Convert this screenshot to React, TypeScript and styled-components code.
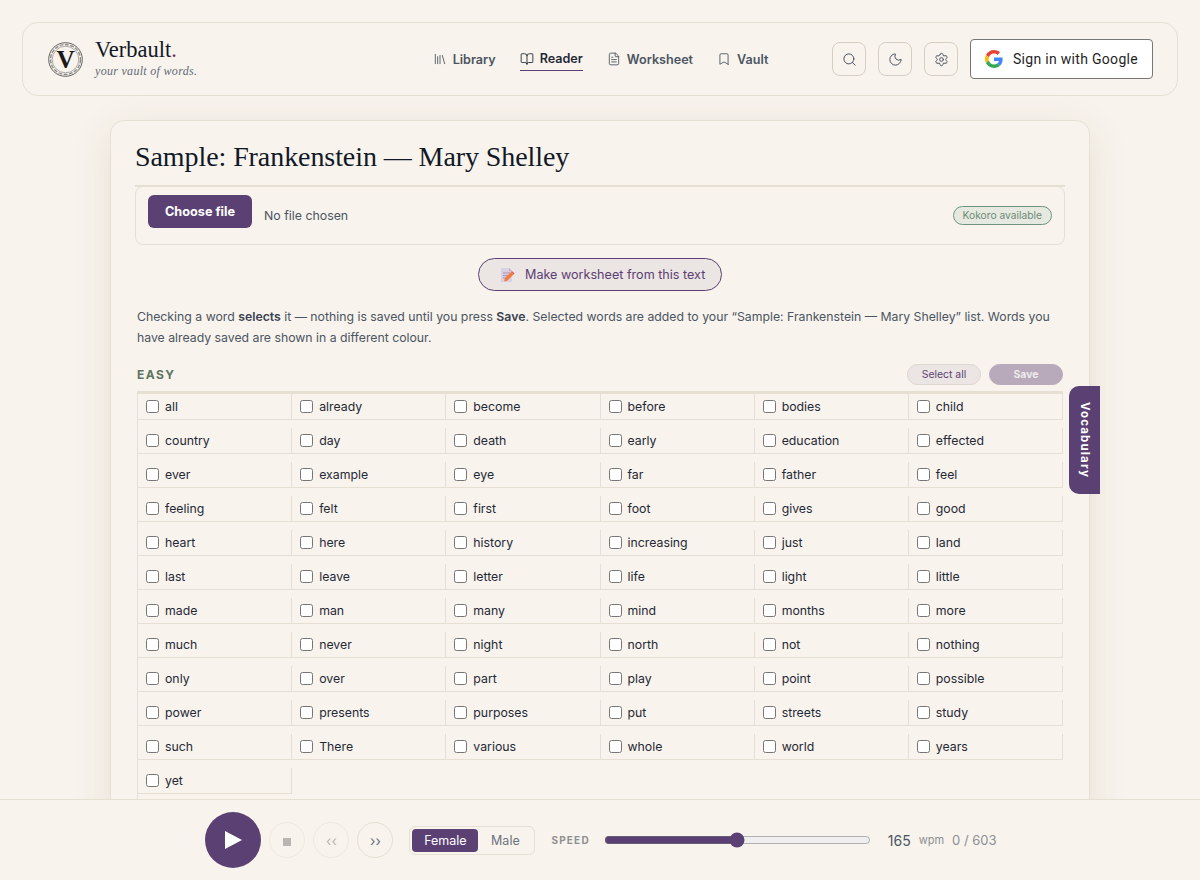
import React from 'react';
import styled, { createGlobalStyle } from 'styled-components';
import { BookOpen, Bookmark, FileText, Library, Moon, Search, Settings } from 'lucide-react';

const purple = '#5b4173';
const line = '#e6dfd3';
const paper = '#f8f3ec';

const GlobalStyle = createGlobalStyle`
  html, body {
    margin: 0;
    height: 880px;
    overflow: hidden;
    background: ${paper};
    font-family: Inter, 'Liberation Sans', sans-serif;
    color: #1f2937;
  }
  * {
    box-sizing: border-box;
  }
`;

const Page = styled.div`
  padding: 22px 22px 0;
`;

const Topbar = styled.header`
  display: grid;
  grid-template-columns: 1fr auto 1fr;
  align-items: center;
  height: 74px;
  padding: 0 24px 0 25px;
  border: 1px solid ${line};
  border-radius: 16px;
`;

const Brand = styled.div`
  display: flex;
  align-items: center;
  gap: 12px;
`;

const BrandText = styled.div`
  display: flex;
  flex-direction: column;
  margin-bottom: 2px;
`;

const BrandName = styled.div`
  font-family: 'Liberation Serif', serif;
  font-size: 22.5px;
  line-height: 22px;
  color: #111827;

  span {
    color: #7a2b4f;
  }
`;

const Tagline = styled.div`
  margin-top: 3px;
  font-family: 'Liberation Serif', serif;
  font-style: italic;
  font-size: 12px;
  line-height: 14px;
  letter-spacing: 0.025em;
  color: #5f6b7a;
`;

const Nav = styled.nav`
  display: flex;
  align-items: center;
  gap: 24px;
`;

const NavItem = styled.a<{ $active?: boolean }>`
  display: flex;
  align-items: center;
  gap: 6px;
  height: 24px;
  padding-top: ${({ $active }) => ($active ? '0' : '1px')};
  font-size: 12.6px;
  font-weight: 600;
  color: ${({ $active }) => ($active ? '#1f2937' : '#4b5563')};
  border-bottom: 1px solid ${({ $active }) => ($active ? purple : 'transparent')};
`;

const Actions = styled.div`
  display: flex;
  align-items: center;
  justify-content: flex-end;
  gap: 12px;
`;

const IconButton = styled.button`
  display: flex;
  align-items: center;
  justify-content: center;
  width: 34px;
  height: 34px;
  padding: 0;
  background: transparent;
  border: 1px solid #d6cfc1;
  border-radius: 8px;
  color: #4b5563;
`;

const GoogleButton = styled.button`
  display: flex;
  align-items: center;
  gap: 10px;
  width: 183px;
  height: 40px;
  padding: 0 14px;
  background: #fff;
  border: 1px solid #747775;
  border-radius: 4px;
  font-family: Roboto, sans-serif;
  font-size: 14px;
  letter-spacing: 0.3px;
  color: #1f1f1f;
`;

const Card = styled.main`
  width: 980px;
  height: 900px;
  margin: 24px auto 0;
  padding: 20px 24px 0;
  border: 1px solid ${line};
  border-radius: 14px;
  box-shadow: 0 10px 40px rgba(70, 60, 40, 0.1);
`;

const Title = styled.h1`
  margin: 0;
  height: 46px;
  border-bottom: 2px solid ${line};
  font-family: 'Liberation Serif', serif;
  font-size: 28px;
  font-weight: 400;
  line-height: 32px;
  letter-spacing: -0.08px;
  color: #111827;
`;

const FileBox = styled.div`
  display: flex;
  align-items: center;
  height: 59px;
  margin-top: -1px;
  padding: 0 12px;
  border: 1px solid ${line};
  border-radius: 8px;
`;

const ChooseButton = styled.button`
  width: 104px;
  height: 33px;
  margin: 0 12px 9px 0;
  padding: 0;
  background: ${purple};
  border: 0;
  border-radius: 6px;
  font-family: Inter, sans-serif;
  font-size: 12.7px;
  font-weight: 700;
  color: #fff;
`;

const FileName = styled.span`
  flex: 1;
  font-size: 12.35px;
  color: #4b5563;
`;

const Badge = styled.span`
  padding: 2px 9px;
  background: #e6e9df;
  border: 1px solid #6f9580;
  border-radius: 999px;
  font-size: 10.25px;
  line-height: 13px;
  color: #6f8a78;
`;

const WorksheetRow = styled.div`
  display: flex;
  justify-content: center;
  margin-top: 13px;
`;

const WorksheetButton = styled.button`
  display: flex;
  align-items: center;
  gap: 10px;
  width: 244px;
  height: 33px;
  padding: 0 0 0 21px;
  background: #ebe5e3;
  border: 1px solid ${purple};
  border-radius: 999px;
  font-family: Inter, sans-serif;
  font-size: 12.6px;
  color: ${purple};
`;

const Intro = styled.p`
  height: 41px;
  margin: 16px 2px 0;
  font-size: 12.28px;
  line-height: 20.6px;
  color: #4b5563;

  b {
    font-weight: 600;
    color: #374151;
  }
`;

const SectionHead = styled.div`
  display: flex;
  align-items: center;
  justify-content: space-between;
  height: 21px;
  margin: 16px 2px 6px;
`;

const SectionName = styled.h2`
  margin: 0;
  font-size: 12px;
  font-weight: 700;
  letter-spacing: 0.12em;
  color: #5d7561;
`;

const SectionActions = styled.div`
  display: flex;
  gap: 8px;
`;

const PillButton = styled.button<{ $primary?: boolean }>`
  width: 74px;
  height: 21px;
  padding: 0;
  background: ${({ $primary }) => ($primary ? '#b9aabb' : '#ebe5e3')};
  border: 1px solid ${({ $primary }) => ($primary ? '#b9aabb' : '#ddd5cf')};
  border-radius: 999px;
  font-family: Inter, sans-serif;
  font-size: 10.4px;
  font-weight: ${({ $primary }) => ($primary ? 700 : 400)};
  color: ${({ $primary }) => ($primary ? '#efeaec' : purple)};
`;

const WordGrid = styled.div`
  display: grid;
  grid-template-columns: repeat(6, 1fr);
  row-gap: 8px;
  margin: 0 2px;
  padding-bottom: 40px;
  border-top: 3px solid ${line};
  border-left: 1px solid ${line};
`;

const WordCell = styled.label`
  display: flex;
  align-items: center;
  gap: 6px;
  height: 26px;
  padding-left: 8px;
  border-right: 1px solid ${line};
  border-bottom: 1px solid ${line};
  font-size: 12.3px;
  color: #1f2937;

  input {
    width: 13px;
    height: 13px;
    margin: 0;
  }
`;

const VocabTab = styled.button`
  position: fixed;
  top: 386px;
  left: 1069px;
  width: 31px;
  height: 108px;
  padding: 0;
  background: ${purple};
  border: 0;
  border-radius: 10px 0 0 10px;
  writing-mode: vertical-rl;
  font-family: Inter, sans-serif;
  font-size: 11.5px;
  font-weight: 700;
  letter-spacing: 0.1em;
  color: #fff;
`;

const PlayerBar = styled.footer`
  position: fixed;
  left: 0;
  right: 0;
  bottom: 0;
  display: flex;
  align-items: center;
  justify-content: center;
  height: 81px;
  padding-left: 2px;
  background: ${paper};
  border-top: 1px solid ${line};
`;

const PlayButton = styled.button`
  display: flex;
  align-items: center;
  justify-content: center;
  width: 56px;
  height: 56px;
  margin-right: 8px;
  padding: 0;
  background: ${purple};
  border: 0;
  border-radius: 50%;
`;

const RoundButton = styled.button<{ $disabled?: boolean }>`
  display: flex;
  align-items: center;
  justify-content: center;
  width: 36px;
  height: 36px;
  margin-right: 8px;
  padding: 0;
  background: transparent;
  border: 1px solid ${({ $disabled }) => ($disabled ? '#eee8df' : line)};
  border-radius: 50%;
  font-family: Inter, sans-serif;
  font-size: 14px;
  color: ${({ $disabled }) => ($disabled ? '#bbb6b0' : '#6b7280')};
`;

const StopMark = styled.span`
  width: 8px;
  height: 8px;
  margin-top: 3px;
  background: #b8b5b3;
`;

const Segment = styled.div`
  display: flex;
  height: 29px;
  margin: 0 16px 0 8px;
  padding: 2px;
  border: 1px solid ${line};
  border-radius: 6px;
`;

const SegmentItem = styled.button<{ $active?: boolean }>`
  padding: 0;
  width: ${({ $active }) => ($active ? '66px' : '54px')};
  background: ${({ $active }) => ($active ? purple : 'transparent')};
  border: 0;
  border-radius: 4px;
  font-family: Inter, sans-serif;
  font-size: 12.5px;
  color: ${({ $active }) => ($active ? '#fff' : '#6b7280')};
`;

const SpeedLabel = styled.span`
  margin-right: 14px;
  font-size: 10px;
  font-weight: 700;
  letter-spacing: 0.12em;
  color: #8d8f94;
`;

const SpeedSlider = styled.input`
  width: 267px;
  margin: 0 17px 0 0;
  accent-color: ${purple};
`;

const SpeedValue = styled.span`
  margin-right: 8px;
  font-size: 14px;
  color: #4b5563;
`;

const WpmUnit = styled.span`
  margin-right: 8px;
  font-size: 11px;
  color: #8d8f94;
`;

const WordCount = styled.span`
  font-size: 13px;
  color: #8d8f94;
`;

const navItems = [
  { label: 'Library', Icon: Library },
  { label: 'Reader', Icon: BookOpen, active: true },
  { label: 'Worksheet', Icon: FileText },
  { label: 'Vault', Icon: Bookmark },
];

const words = [
  'all', 'already', 'become', 'before', 'bodies', 'child',
  'country', 'day', 'death', 'early', 'education', 'effected',
  'ever', 'example', 'eye', 'far', 'father', 'feel',
  'feeling', 'felt', 'first', 'foot', 'gives', 'good',
  'heart', 'here', 'history', 'increasing', 'just', 'land',
  'last', 'leave', 'letter', 'life', 'light', 'little',
  'made', 'man', 'many', 'mind', 'months', 'more',
  'much', 'never', 'night', 'north', 'not', 'nothing',
  'only', 'over', 'part', 'play', 'point', 'possible',
  'power', 'presents', 'purposes', 'put', 'streets', 'study',
  'such', 'There', 'various', 'whole', 'world', 'years',
  'yet',
];

const Logo = () => (
  <svg width="35" height="35" viewBox="0 0 36 36" fill="none">
    <circle cx="18" cy="18" r="17.3" stroke="#3a3a3a" strokeWidth="0.8" />
    <circle cx="18" cy="18" r="15.4" stroke="#8a8a8a" strokeWidth="1.4" strokeDasharray="4 1.5" />
    <circle cx="18" cy="18" r="13.7" stroke="#555" strokeWidth="0.5" />
    <text x="18" y="27" textAnchor="middle" fontFamily="Liberation Serif, serif" fontWeight="700" fontSize="26" fill="#1a1a1a">
      V
    </text>
  </svg>
);

const GoogleIcon = () => (
  <svg width="18" height="18" viewBox="0 0 48 48">
    <path fill="#EA4335" d="M24 9.5c3.54 0 6.71 1.22 9.21 3.6l6.85-6.85C35.9 2.38 30.47 0 24 0 14.62 0 6.51 5.38 2.56 13.22l7.98 6.19C12.43 13.72 17.74 9.5 24 9.5z" />
    <path fill="#4285F4" d="M46.98 24.55c0-1.57-.15-3.09-.38-4.55H24v9.02h12.94c-.58 2.96-2.26 5.48-4.78 7.18l7.73 6c4.51-4.18 7.09-10.36 7.09-17.65z" />
    <path fill="#FBBC05" d="M10.53 28.59c-.48-1.45-.76-2.99-.76-4.59s.27-3.14.76-4.59l-7.98-6.19C.92 16.46 0 20.12 0 24c0 3.88.92 7.54 2.56 10.78l7.97-6.19z" />
    <path fill="#34A853" d="M24 48c6.48 0 11.93-2.13 15.89-5.81l-7.73-6c-2.15 1.45-4.92 2.3-8.16 2.3-6.26 0-11.57-4.22-13.47-9.91l-7.98 6.19C6.51 42.62 14.62 48 24 48z" />
  </svg>
);

const MemoIcon = () => (
  <svg width="15" height="16" viewBox="0 0 15 16">
    <path fill="#d9d0e2" d="M1 1h8l3 3v11H1z" />
    <path fill="#bcaecb" d="M9 1l3 3H9z" />
    <path stroke="#a795b8" strokeWidth="1" d="M3 6h7M3 8.5h6M3 11h3" />
    <path fill="#f47b3c" d="M4 14.5l1-3.5 6-6 2.5 2.5-6 6z" />
    <path fill="#e8505b" d="M11 5l1-1 2.5 2.5-1 1z" />
  </svg>
);

const App: React.FC = () => {
  return (
    <>
      <GlobalStyle />
      <Page>
        <Topbar>
          <Brand>
            <Logo />
            <BrandText>
              <BrandName>
                Verbault<span>.</span>
              </BrandName>
              <Tagline>your vault of words.</Tagline>
            </BrandText>
          </Brand>
          <Nav>
            {navItems.map(({ label, Icon, active }) => (
              <NavItem key={label} $active={active}>
                <Icon size={14} strokeWidth={1.5} />
                {label}
              </NavItem>
            ))}
          </Nav>
          <Actions>
            <IconButton>
              <Search size={15} strokeWidth={1.6} />
            </IconButton>
            <IconButton>
              <Moon size={15} strokeWidth={1.6} />
            </IconButton>
            <IconButton>
              <Settings size={15} strokeWidth={1.6} />
            </IconButton>
            <GoogleButton>
              <GoogleIcon />
              Sign in with Google
            </GoogleButton>
          </Actions>
        </Topbar>

        <Card>
          <Title>Sample: Frankenstein — Mary Shelley</Title>
          <FileBox>
            <ChooseButton>Choose file</ChooseButton>
            <FileName>No file chosen</FileName>
            <Badge>Kokoro available</Badge>
          </FileBox>
          <WorksheetRow>
            <WorksheetButton>
              <MemoIcon />
              Make worksheet from this text
            </WorksheetButton>
          </WorksheetRow>
          <Intro>
            Checking a word <b>selects</b> it — nothing is saved until you press <b>Save</b>. Selected words are added
            to your “Sample: Frankenstein — Mary Shelley” list. Words you have already saved are shown in a different
            colour.
          </Intro>
          <SectionHead>
            <SectionName>EASY</SectionName>
            <SectionActions>
              <PillButton>Select all</PillButton>
              <PillButton $primary>Save</PillButton>
            </SectionActions>
          </SectionHead>
          <WordGrid>
            {words.map(word => (
              <WordCell key={word}>
                <input type="checkbox" />
                {word}
              </WordCell>
            ))}
          </WordGrid>
        </Card>
      </Page>

      <VocabTab>Vocabulary</VocabTab>

      <PlayerBar>
        <PlayButton>
          <svg width="20" height="20" viewBox="0 0 20 20">
            <path fill="#fff" d="M2 1l17 9-17 9z" />
          </svg>
        </PlayButton>
        <RoundButton $disabled>
          <StopMark />
        </RoundButton>
        <RoundButton $disabled>‹‹</RoundButton>
        <RoundButton>››</RoundButton>
        <Segment>
          <SegmentItem $active>Female</SegmentItem>
          <SegmentItem>Male</SegmentItem>
        </Segment>
        <SpeedLabel>SPEED</SpeedLabel>
        <SpeedSlider type="range" min={80} max={250} defaultValue={165} />
        <SpeedValue>165</SpeedValue>
        <WpmUnit>wpm</WpmUnit>
        <WordCount>0 / 603</WordCount>
      </PlayerBar>
    </>
  );
};

export default App;
